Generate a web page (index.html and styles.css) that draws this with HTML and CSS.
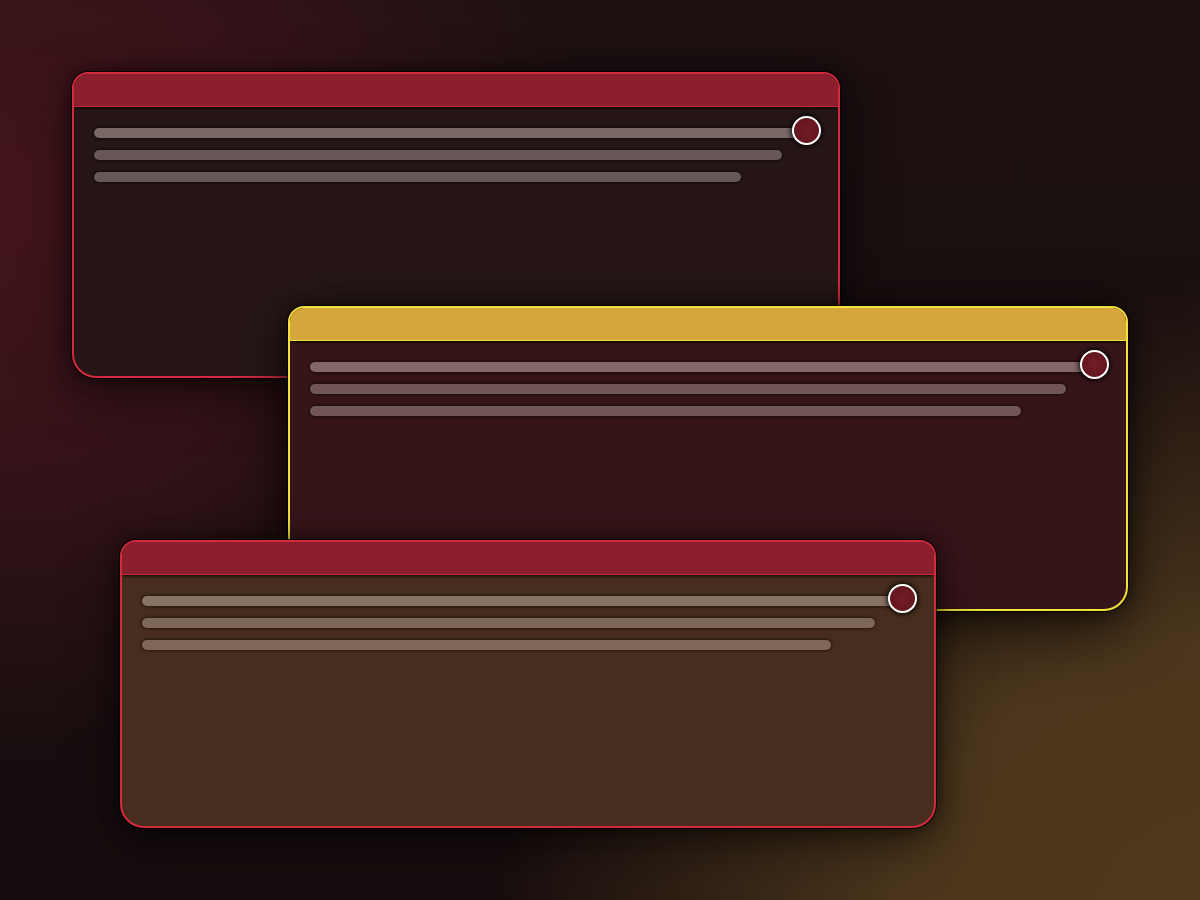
FILE: index.html
```html
<!DOCTYPE html>
<html>
<head>
<meta charset="utf-8">
<link rel="stylesheet" href="styles.css">
</head>
<body>
<div class="desk">
  <div class="win win-a">
    <div class="bar"></div>
    <div class="content">
      <div class="line l1"></div>
      <div class="line l2"></div>
      <div class="line l3"></div>
      <span class="dot"></span>
    </div>
  </div>
  <div class="win win-b">
    <div class="bar"></div>
    <div class="content">
      <div class="line l1"></div>
      <div class="line l2"></div>
      <div class="line l3"></div>
      <span class="dot"></span>
    </div>
  </div>
  <div class="win win-c">
    <div class="bar"></div>
    <div class="content">
      <div class="line l1"></div>
      <div class="line l2"></div>
      <div class="line l3"></div>
      <span class="dot"></span>
    </div>
  </div>
</div>
</body>
</html>
```
FILE: styles.css
```css
* { box-sizing: border-box; }
html, body { margin: 0; padding: 0; }
body {
  width: 1200px;
  height: 900px;
  overflow: hidden;
  font-family: "Liberation Sans", Arial, sans-serif;
}
.desk {
  position: relative;
  width: 1200px;
  height: 900px;
  background:
    radial-gradient(ellipse 820px 720px at 1230px 930px, #50391d 0%, rgba(78,56,29,0.95) 40%, rgba(40,26,18,0) 90%),
    radial-gradient(ellipse 700px 650px at 0px 200px, #43151b 0%, rgba(60,20,26,0.8) 40%, rgba(30,14,16,0) 85%),
    linear-gradient(180deg, #1c1011 0%, #170d0e 100%);
}
.win {
  position: absolute;
  display: flex;
  flex-direction: column;
  border: 2px solid #d42a3c;
  border-radius: 16px 16px 24px 24px;
  overflow: hidden;
  box-shadow: 0 0 0 1px rgba(0,0,0,0.8), 0 0 18px rgba(0,0,0,0.55), 0 16px 50px rgba(0,0,0,0.5);
}
.bar {
  height: 33px;
  flex: none;
  background: #8b1f2d;
  border-bottom: 1px solid #c8283a;
  box-shadow: 0 1px 3px rgba(0,0,0,0.85);
  position: relative;
  z-index: 1;
}
.content {
  position: relative;
  flex: 1;
  display: flex;
  flex-direction: column;
  gap: 12px;
  padding: 21px 20px 0 20px;
}
.line {
  height: 10px;
  border-radius: 5px;
  background: rgba(255,238,232,0.30);
  box-shadow: 0 0 3px 1px rgba(0,0,0,0.55);
}
.line.l1 { width: 100%; background: rgba(255,238,232,0.38); }
.line.l2 { width: 95%; }
.line.l3 { width: 89.3%; }
.dot {
  position: absolute;
  top: 9px;
  right: 17px;
  width: 29px;
  height: 29px;
  border-radius: 50%;
  border: 2px solid #ffffff;
  background: radial-gradient(circle at 50% 50%, #731c26 0%, #5e141d 100%);
  box-shadow: 0 0 4px 2px rgba(0,0,0,0.7);
}
.win-a {
  left: 72px; top: 72px; width: 768px; height: 306px;
  background: #261617;
}
.win-b {
  left: 288px; top: 306px; width: 840px; height: 305px;
  background: #361519;
  border-color: #f2e23a;
  box-shadow: 0 0 0 1px rgba(0,0,0,0.8), 0 0 20px rgba(0,0,0,0.6), 0 18px 60px rgba(0,0,0,0.6);
}
.win-b .bar {
  background: #d4a63b;
  border-bottom-color: #f2e23a;
}
.win-c {
  left: 120px; top: 540px; width: 816px; height: 288px;
  background: #472d1e;
}
.win-c .line { background: rgba(255,240,225,0.30); }
.win-c .line.l1 { background: rgba(255,240,225,0.36); }
```
